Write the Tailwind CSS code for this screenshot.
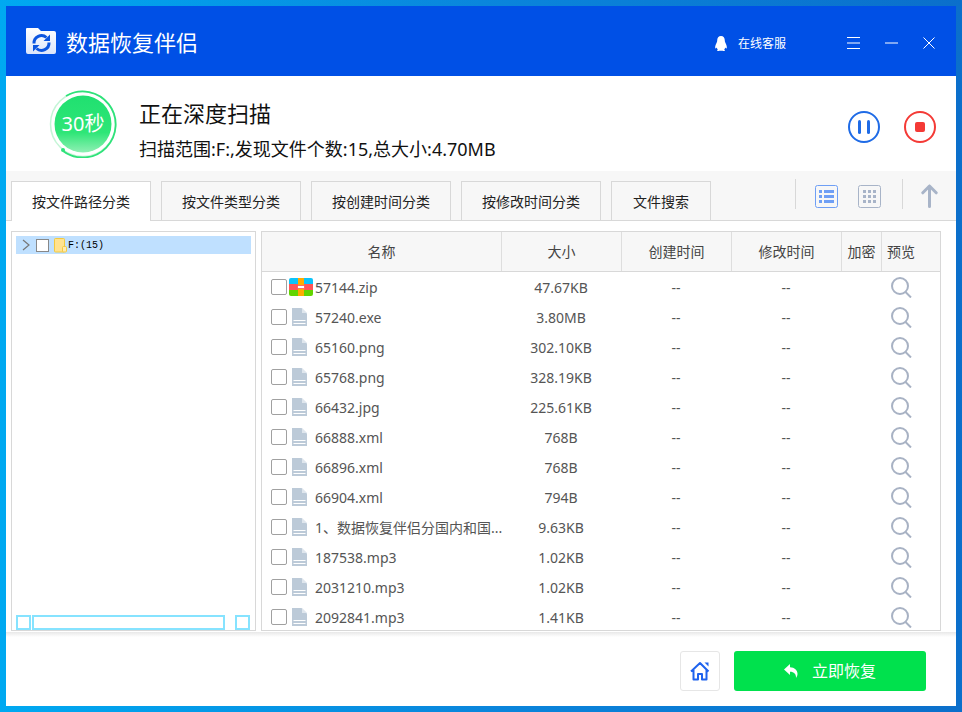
<!DOCTYPE html>
<html lang="zh-CN">
<head>
    <meta charset="UTF-8">
    <title>数据恢复伴侣</title>
    <script src="https://cdn.jsdelivr.net/npm/@tailwindcss/browser@4"></script>
</head>
<body class="w-[962px] h-[712px] overflow-hidden bg-gradient-to-r from-[#00a9f1] via-[#0a86dc] to-[#0b6fcb] p-[6px] font-['Noto_Sans','Noto_Sans_CJK_SC',sans-serif]">
    <div class="w-[950px] h-[700px] bg-white flex flex-col">

        <!-- Title bar -->
        <div class="h-[70px] bg-[#0050e6] flex items-center pl-[20px] text-white">
            <svg width="30" height="26" viewBox="0 0 30 26">
                <defs>
                    <linearGradient id="folder" x1="0" y1="0" x2="0" y2="1">
                        <stop offset="0" stop-color="#ffffff"/>
                        <stop offset="1" stop-color="#dbe5fb"/>
                    </linearGradient>
                </defs>
                <path d="M1 0h11l3 3h13a2 2 0 0 1 2 2v19a2 2 0 0 1-2 2H2a2 2 0 0 1-2-2V1a1 1 0 0 1 1-1z" fill="url(#folder)"/>
                <path d="M8 15.500A7.500 7.500 0 0 1 20.500 9.500M23 14.500A7.500 7.500 0 0 1 10.500 20.500" fill="none" stroke="#0b55e0" stroke-width="3"/>
                <path d="M24 6.500v6.500h-6.500zM7 23.500V17h6.500z" fill="#0b55e0"/>
            </svg>
            <span class="ml-[10px] mt-[2px] text-[22px] leading-none">数据恢复伴侣</span>
            <div class="ml-auto mt-[4px] flex items-center">
                <svg width="12" height="15" viewBox="0 0 12 15" fill="#fff">
                    <path d="M6 0c2.500 0 3.800 2 3.800 4.500 0 1 .2 1.500.7 2.500.8 1.500 1.500 3.500 1.300 5-.2.800-1 .2-1.500-.6-.2 1-.7 1.600-1.200 2 .6.400 1.100.7.900 1.100-.2.500-2 .5-3 .3-.6-.1-1.400-.1-2 0-1 .2-2.800.2-3-.3-.2-.4.300-.7.900-1.100-.5-.4-1-1-1.200-2-.5.800-1.300 1.400-1.500.6-.2-1.500.5-3.500 1.300-5 .5-1 .7-1.500.7-2.500C2.200 2 3.500 0 6 0z"/>
                </svg>
                <span class="ml-[11px] mt-[1px] text-[12px] leading-none">在线客服</span>
                <svg class="ml-[61px]" width="13" height="12" viewBox="0 0 13 12" stroke="#fff" stroke-width="1"><path d="M0 .5h13M0 6h13M0 11.500h13"/></svg>
                <svg class="ml-[25px]" width="13" height="12" viewBox="0 0 13 12" stroke="#fff" stroke-width="1"><path d="M0 6h13"/></svg>
                <svg class="ml-[25px] mr-[21px]" width="12" height="12" viewBox="0 0 12 12" stroke="#fff" stroke-width="1"><path d="M.5.500l11 11M11.500.5l-11 11"/></svg>
            </div>
        </div>

        <!-- Scan status -->
        <div class="h-[95px] flex items-center pl-[43px] pr-[20px]">
            <div class="relative w-[68px] h-[68px] shrink-0">
                <svg class="absolute inset-0" width="68" height="68" viewBox="0 0 68 68">
                    <defs>
                        <linearGradient id="disc" x1="0" y1="0" x2="0" y2="1">
                            <stop offset="0" stop-color="#20e070"/>
                            <stop offset="0.65" stop-color="#2ee677"/>
                            <stop offset="1" stop-color="#8ff0b4"/>
                        </linearGradient>
                    </defs>
                    <circle cx="34" cy="34" r="32.500" fill="none" stroke="#c4f5d6" stroke-width="1.500"/>
                    <path d="M14 61A33 33 0 1 0 17 6" fill="none" stroke="#2fe27a" stroke-width="1.800"/>
                    <circle cx="14" cy="60" r="2" fill="#2fe27a"/>
                    <circle cx="34" cy="34" r="28.500" fill="url(#disc)"/>
                </svg>
                <span class="absolute inset-0 flex items-center justify-center text-white text-[20px] leading-none">30秒</span>
            </div>
            <div class="ml-[22px] mt-[13px] text-[#111]">
                <div class="text-[22px] leading-[30px]">正在深度扫描</div>
                <div class="text-[18px] leading-[26px] mt-[8px]">扫描范围:F:,发现文件个数:15,总大小:4.70MB</div>
            </div>
            <div class="ml-auto mt-[6px] flex items-center gap-[24px]">
                <div class="w-[32px] h-[32px] rounded-full border-2 border-[#1f6be6] flex items-center justify-center gap-[6px]">
                    <span class="w-[3px] h-[14px] rounded-full bg-[#1f6be6]"></span>
                    <span class="w-[3px] h-[14px] rounded-full bg-[#1f6be6]"></span>
                </div>
                <div class="w-[32px] h-[32px] rounded-full border-2 border-[#f43a36] flex items-center justify-center">
                    <span class="w-[10px] h-[10px] rounded-[2px] bg-[#f43a36]"></span>
                </div>
            </div>
        </div>

        <!-- Tabs -->
        <div class="h-[50px] bg-[#f7f7f7] border-b border-[#d8d8d8] flex items-end pl-[5px] relative">
            <div class="w-[140px] h-[40px] bg-white border border-b-0 border-[#d8d8d8] flex items-center justify-center text-[14px] text-[#222] -mb-px">按文件路径分类</div>
            <div class="ml-[10px] w-[140px] h-[39px] bg-[#f7f7f7] border border-b-0 border-[#d8d8d8] flex items-center justify-center text-[14px] text-[#222]">按文件类型分类</div>
            <div class="ml-[10px] w-[140px] h-[39px] bg-[#f7f7f7] border border-b-0 border-[#d8d8d8] flex items-center justify-center text-[14px] text-[#222]">按创建时间分类</div>
            <div class="ml-[10px] w-[140px] h-[39px] bg-[#f7f7f7] border border-b-0 border-[#d8d8d8] flex items-center justify-center text-[14px] text-[#222]">按修改时间分类</div>
            <div class="ml-[10px] w-[100px] h-[39px] bg-[#f7f7f7] border border-b-0 border-[#d8d8d8] flex items-center justify-center text-[14px] text-[#222]">文件搜索</div>
            <div class="ml-auto h-[50px] flex items-center pt-[2px]">
                <span class="w-px h-[30px] -mt-[4px] bg-[#d8d8d8]"></span>
                <svg class="ml-[19px]" width="23" height="23" viewBox="0 0 23 23">
                    <rect x=".5" y=".5" width="22" height="22" rx="2" fill="none" stroke="#6f9ff5"/>
                    <path d="M4 5h3v3H4zM9 5h10v3H9zM4 10h3v3H4zM9 10h10v3H9zM4 15h3v3H4zM9 15h10v3H9z" fill="#6f9ff5"/>
                </svg>
                <svg class="ml-[20px]" width="23" height="23" viewBox="0 0 23 23">
                    <rect x=".5" y=".5" width="22" height="22" rx="2" fill="none" stroke="#a8b4c8"/>
                    <path d="M5 5h3v3H5zM10 5h3v3h-3zM15 5h3v3h-3zM5 10h3v3H5zM10 10h3v3h-3zM15 10h3v3h-3zM5 15h3v3H5zM10 15h3v3h-3zM15 15h3v3h-3z" fill="#a8b4c8"/>
                </svg>
                <span class="ml-[21px] w-px h-[30px] -mt-[4px] bg-[#d8d8d8]"></span>
                <svg class="ml-[18px] mr-[18px]" width="17" height="24" viewBox="0 0 17 24" fill="none" stroke="#a8b4c8" stroke-width="3" stroke-linecap="round" stroke-linejoin="round"><path d="M8.500 22.500V2M1.800 8.800 8.500 2l6.700 6.800"/></svg>
            </div>
        </div>

        <!-- Panels -->
        <div class="h-[411px] flex pl-[5px] pt-[10px] gap-[5px]">
            <!-- Folder tree -->
            <div class="w-[245px] h-[400px] border border-[#d8d8d8] flex flex-col px-[4px] pt-[4px]">
                <div class="h-[18px] bg-[#bfe0ff] flex items-center">
                    <svg class="ml-[6px]" width="8" height="12" viewBox="0 0 8 12" fill="none" stroke="#777" stroke-width="1.200"><path d="M1 1l6 5-6 5"/></svg>
                    <span class="ml-[6px] w-[13px] h-[13px] bg-white border border-[#888]"></span>
                    <svg class="ml-[5px]" width="13" height="15" viewBox="0 0 13 15">
                        <rect x=".5" y=".5" width="10" height="13.500" rx="1" fill="#ffe28f" stroke="#f3c93f"/>
                        <rect x="8.500" y="8.500" width="4" height="5.500" rx="1" fill="#ffe9ae" stroke="#f3c93f"/>
                    </svg>
                    <span class="ml-[1px] mt-[2px] font-['Liberation_Mono',monospace] text-[10px] leading-none text-black">F:(15)</span>
                </div>
                <div class="mt-auto h-[15px] flex">
                    <span class="w-[15px] h-[15px] border-2 border-[#86e3ff]"></span>
                    <span class="ml-px w-[193px] h-[15px] border-2 border-[#86e3ff]"></span>
                    <span class="ml-auto mr-px w-[15px] h-[15px] border-2 border-[#86e3ff]"></span>
                </div>
            </div>

            <!-- File table -->
            <div id="table" class="w-[680px] h-[400px] border border-[#d8d8d8] overflow-hidden">
                <div class="h-[40px] bg-[#f7f7f7] border-b border-[#d8d8d8] flex text-[14px] text-[#444] leading-[40px] text-center">
                    <div class="w-[239px] border-r border-[#dedede] box-content">名称</div>
                    <div class="w-[119px] border-r border-[#dedede] box-content">大小</div>
                    <div class="w-[109px] border-r border-[#dedede] box-content">创建时间</div>
                    <div class="w-[109px] border-r border-[#dedede] box-content">修改时间</div>
                    <div class="w-[39px] border-r border-[#dedede] box-content">加密</div>
                    <div class="w-[38px]">预览</div>
                </div>
                <div id="rows"></div>
            </div>
        </div>

        <!-- Footer -->
        <div class="flex-1 bg-gradient-to-b from-[#e8e8e8] to-white to-[5px] flex items-start pt-[19px]">
            <div class="ml-[674px] w-[40px] h-[40px] rounded-[3px] border border-[#e6e6e6] flex items-center justify-center">
                <svg width="20" height="20" viewBox="0 0 20 20" fill="none" stroke="#1f63ee" stroke-width="2" stroke-linejoin="round">
                    <path d="M1 10.500 10 2l8.500 8.500M3.500 9v9.500H8V13h4v5.500h4.500V9"/>
                    <path d="M14.500 1.500h4v4z" fill="#1f63ee" stroke="none"/>
                </svg>
            </div>
            <div class="ml-[14px] w-[192px] h-[40px] rounded-[3px] bg-[#00e14d] flex items-center justify-center text-white text-[16px]">
                <svg width="14" height="14" viewBox="0 0 14 14" fill="#fff"><path d="M0 5.500 6 0v3.300c4.500 0 7.500 3 7.500 6.500 0 1.700-.6 3.200-1.500 4.200.3-3.700-2-6.200-6-6.200v3.200z"/></svg>
                <span class="ml-[14px]">立即恢复</span>
            </div>
        </div>
    </div>

    <script>
        const files = [
            ['57144.zip', '47.67KB', true],
            ['57240.exe', '3.80MB'],
            ['65160.png', '302.10KB'],
            ['65768.png', '328.19KB'],
            ['66432.jpg', '225.61KB'],
            ['66888.xml', '768B'],
            ['66896.xml', '768B'],
            ['66904.xml', '794B'],
            ['1、数据恢复伴侣分国内和国...', '9.63KB'],
            ['187538.mp3', '1.02KB'],
            ['2031210.mp3', '1.02KB'],
            ['2092841.mp3', '1.41KB'],
        ];

        const zipIcon = `<svg width="24" height="18" viewBox="0 0 24 18"><path d="M2 0h20a2 2 0 0 1 2 2v4H0V2a2 2 0 0 1 2-2z" fill="#0bc4fa"/><rect y="6" width="24" height="6" fill="#ff5558"/><path d="M0 12h24v4a2 2 0 0 1-2 2H2a2 2 0 0 1-2-2z" fill="#62d500"/><rect x="9" width="6" height="18" fill="#ffab00"/><rect x="8.500" y="7.500" width="7" height="3" fill="#fff" stroke="#ff5558" stroke-width=".8"/></svg>`;
        const fileIcon = `<svg class="ml-[3px] mr-[6px]" width="15" height="18" viewBox="0 0 15 18"><path d="M0 0h9.500L15 5.500V18H0z" fill="#bccad8"/><path d="M10 0l5 5h-5z" fill="#dfe6ed"/><path d="M1.500 12.500h12M1.500 15.500h12" stroke="#fff" stroke-width="1"/></svg>`;
        const lens = `<svg width="21" height="21" viewBox="0 0 21 21" fill="none" stroke="#a8b2c4" stroke-width="2"><circle cx="9" cy="9" r="8"/><path d="M14.500 15l5.500 5.500"/></svg>`;

        document.getElementById('rows').innerHTML = files.map(([name, size, zip]) => `
            <div class="h-[30px] flex items-center text-[14px] text-[#555]">
                <div class="w-[239px] flex items-center pl-[9px]">
                    <span class="w-[16px] h-[16px] shrink-0 bg-white border border-[#a0a0a0] rounded-[2px]"></span>
                    <span class="ml-[2px] w-[24px] flex justify-start shrink-0">${zip ? zipIcon : fileIcon}</span>
                    <span class="ml-[2px] whitespace-nowrap">${name}</span>
                </div>
                <div class="w-[120px] text-center">${size}</div>
                <div class="w-[110px] text-center">--</div>
                <div class="w-[110px] text-center">--</div>
                <div class="w-[40px]"></div>
                <div class="w-[38px] flex justify-center pl-[3px]">${lens}</div>
            </div>`).join('');
    </script>
</body>
</html>
